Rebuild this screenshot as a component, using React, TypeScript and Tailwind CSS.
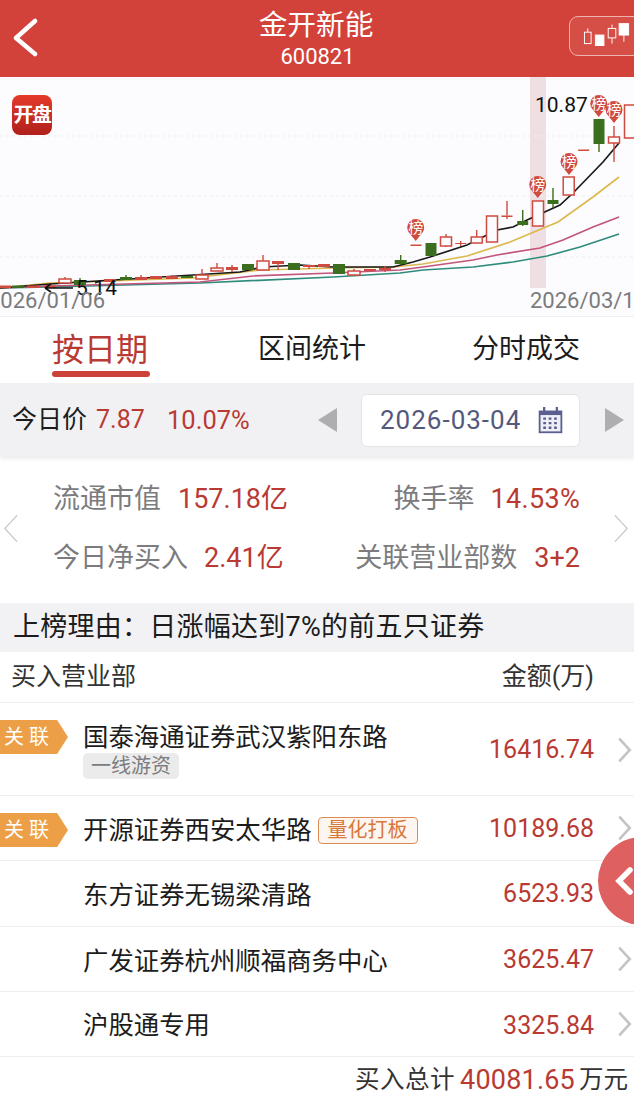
const CJK = "font-['Roboto','Noto_Sans_CJK_SC',sans-serif]"

// chart data in page coordinates: x, body top, body bottom, wick top, wick bottom
type Candle = { x: number; t: number; b: number; wt?: number; wb?: number; kind: 'green' | 'hollow' | 'solid' }

const CANDLES: Candle[] = [
  { x: 5, t: 285.5, b: 288, kind: 'solid' },
  { x: 18, t: 285.5, b: 288, kind: 'green' },
  { x: 33, t: 285.5, b: 288, kind: 'solid' },
  { x: 50, t: 285.5, b: 288, kind: 'solid' },
  { x: 65, t: 279, b: 283, wt: 277, kind: 'hollow' },
  { x: 80, t: 280, b: 285, wt: 278, kind: 'green' },
  { x: 110, t: 279, b: 282, kind: 'solid' },
  { x: 126, t: 277, b: 280, wt: 275, kind: 'green' },
  { x: 141, t: 277, b: 280, wt: 275, kind: 'solid' },
  { x: 156, t: 276, b: 279, kind: 'solid' },
  { x: 172, t: 276, b: 279, wt: 275, kind: 'solid' },
  { x: 187, t: 276, b: 278, kind: 'green' },
  { x: 202, t: 275, b: 279, wt: 269, kind: 'hollow' },
  { x: 217, t: 268, b: 271, wt: 263, kind: 'hollow' },
  { x: 232, t: 267, b: 270, wt: 265, wb: 272, kind: 'solid' },
  { x: 248, t: 264, b: 270, kind: 'green' },
  { x: 263, t: 261, b: 270, wt: 255, kind: 'hollow' },
  { x: 278, t: 261, b: 264, wb: 270, kind: 'solid' },
  { x: 294, t: 263, b: 270, kind: 'green' },
  { x: 309, t: 265, b: 267, wb: 269, kind: 'solid' },
  { x: 324, t: 264, b: 267, kind: 'solid' },
  { x: 339, t: 264, b: 274, kind: 'green' },
  { x: 354, t: 271, b: 275, wt: 269, kind: 'hollow' },
  { x: 370, t: 269, b: 271, kind: 'solid' },
  { x: 385, t: 268, b: 270, wt: 266, wb: 272, kind: 'solid' },
  { x: 400.7, t: 260, b: 264, wt: 255, wb: 265, kind: 'green' },
  { x: 416, t: 244.5, b: 246, kind: 'solid' },
  { x: 431, t: 243, b: 256, kind: 'green' },
  { x: 446, t: 237, b: 246, wt: 234, wb: 247, kind: 'hollow' },
  { x: 460.7, t: 243, b: 244, wt: 241, wb: 246, kind: 'solid' },
  { x: 476.7, t: 237, b: 243, wt: 230, kind: 'hollow' },
  { x: 492, t: 216, b: 242, kind: 'hollow' },
  { x: 507, t: 215.5, b: 217, wt: 201, wb: 219, kind: 'solid' },
  { x: 522.7, t: 221, b: 225, wt: 210, wb: 226, kind: 'green' },
  { x: 538, t: 201, b: 226, kind: 'hollow' },
  { x: 553, t: 200, b: 204, wt: 188, wb: 208, kind: 'green' },
  { x: 568.7, t: 177, b: 195, kind: 'hollow' },
  { x: 583.7, t: 149.5, b: 151, kind: 'solid' },
  { x: 599, t: 119, b: 144, wb: 152, kind: 'green' },
  { x: 614, t: 137, b: 143, wt: 126, wb: 162, kind: 'hollow' },
  { x: 630, t: 105, b: 138, kind: 'hollow' },
]

const PINS = [
  [415.7, 227],
  [537.7, 184],
  [569, 161],
  [598.7, 103],
  [614, 109],
]

const LINES = [
  { color: '#2f8c7c', pts: '0,288 50,287 200,283 333,277 400,273 423,270 473,267 513,262 547,256 580,247 619,234' },
  { color: '#c2557c', pts: '0,288 50,286 200,282 253,276 333,273 400,270 423,267 473,260 497,255 540,248 563,240 593,227 619,217' },
  { color: '#dcb94f', pts: '0,288 50,283 193,278 260,270 333,268 393,267 423,264 467,256 510,242 558,222 593,197 619,177' },
  { color: '#1a1a1a', pts: '0,288 50,284 193,275 240,272 263,267 300,265 333,267 393,267 413,262 430,257 467,245 497,230 513,227 527,220 560,205 573,193 603,162 619,143' },
]

function Chart() {
  return (
    <svg viewBox="0 77 634 239" className="block h-[239px] w-[634px] bg-[#fcfcfe]">
      <rect x="530" y="77" width="16" height="211" fill="#efdfe2" />
      {[136, 196, 257].map(y => (
        <line key={y} x1="0" x2="634" y1={y} y2={y} stroke="#eeeef0" strokeDasharray="3 3" />
      ))}
      {LINES.map(l => (
        <polyline key={l.color} points={l.pts} fill="none" stroke={l.color} strokeWidth="1.7" />
      ))}
      {CANDLES.map(c => {
        const color = c.kind === 'green' ? '#3c6e1f' : '#cf4a3f'
        const w = c.t < 260 && c.x > 400 ? 11 : 12
        return (
          <g key={c.x}>
            {c.wt && <line x1={c.x} x2={c.x} y1={c.wt} y2={c.t} stroke={color} strokeWidth="1.4" />}
            {c.wb && <line x1={c.x} x2={c.x} y1={c.b} y2={c.wb} stroke={color} strokeWidth="1.4" />}
            <rect
              x={c.x - w / 2}
              y={c.t}
              width={w}
              height={c.b - c.t}
              fill={c.kind === 'hollow' ? '#fcfcfe' : color}
              stroke={color}
              strokeWidth={c.kind === 'hollow' ? 1.5 : 0}
            />
          </g>
        )
      })}
      {PINS.map(([x, y]) => (
        <g key={x}>
          <path
            d={`M${x} ${y + 14} L${x - 6} ${y + 6.5} A8.5 8.5 0 1 1 ${x + 6} ${y + 6.5} Z`}
            fill="#cf4a3f"
          />
          <text x={x} y={y + 5.5} textAnchor="middle" fontSize="15" fill="#fff" fontFamily="'Noto Sans CJK SC', sans-serif">
            榜
          </text>
        </g>
      ))}
      <path d="M45 288 L73 288 M45 288 L51 284 M45 288 L51 292" stroke="#111" strokeWidth="1.6" fill="none" />
      <text x="76" y="295" fontSize="21" fill="#111" fontFamily="Roboto, sans-serif">5.14</text>
      <text x="535" y="112" fontSize="21" fill="#111" fontFamily="Roboto, sans-serif">10.87</text>
      <text x="-12" y="308" fontSize="22" fill="#7b7b7d" fontFamily="Roboto, sans-serif">2026/01/06</text>
      <text x="530" y="308" fontSize="22" fill="#7b7b7d" fontFamily="Roboto, sans-serif">2026/03/12</text>
    </svg>
  )
}

function Chevron({ className, thin }: { className: string; thin?: boolean }) {
  return (
    <svg viewBox="0 0 16 32" className={className} fill="none" stroke="#c4c4c6" strokeWidth={thin ? 1.1 : 3}>
      <path d="M2 3 L14 16 L2 29" />
    </svg>
  )
}

function GuanLian() {
  return (
    <div className="absolute left-0 top-[17px] flex h-[34px] w-[68px] items-center bg-[#ec9f47] pl-[4px] text-[20px] tracking-[5px] text-[#fff] shadow-[0_4px_6px_rgba(0,0,0,0.08)] [clip-path:polygon(0_0,84%_0,100%_50%,84%_100%,0_100%)]">
      关联
    </div>
  )
}

type Row = { name: string; amount: string; h: string; tag?: string; gray?: string; linked?: boolean; amountTop: string; nameTop: string }

const ROWS: Row[] = [
  { name: '国泰海通证券武汉紫阳东路', amount: '16416.74', h: 'h-[93px]', gray: '一线游资', linked: true, amountTop: 'top-[29px]', nameTop: 'mt-[16px]' },
  { name: '开源证券西安太华路', amount: '10189.68', h: 'h-[65px]', tag: '量化打板', linked: true, amountTop: 'top-[15px]', nameTop: 'mt-[16px]' },
  { name: '东方证券无锡梁清路', amount: '6523.93', h: 'h-[66px]', amountTop: 'top-[15px]', nameTop: 'mt-[16px]' },
  { name: '广发证券杭州顺福商务中心', amount: '3625.47', h: 'h-[65px]', amountTop: 'top-[15px]', nameTop: 'mt-[16px]' },
  { name: '沪股通专用', amount: '3325.84', h: 'h-[65px]', amountTop: 'top-[16px]', nameTop: 'mt-[15px]' },
]

export default function App() {
  return (
    <div className={`relative h-[1104px] w-[634px] overflow-hidden bg-white ${CJK}`}>
      {/* Header */}
      <div className="relative flex h-[77px] flex-col items-center bg-[#d2423a] pt-[7px] text-white">
        <svg viewBox="0 0 28 40" className="absolute left-[12px] top-[17px] h-[40px] w-[28px]" fill="none" stroke="#fff" strokeWidth="4.5" strokeLinecap="round" strokeLinejoin="round">
          <path d="M23 4 L4 21 L23 37" />
        </svg>
        <div className="-ml-[2px] text-[28.7px] leading-[36px]">金开新能</div>
        <div className="ml-[1px] mt-[1px] text-[22px] leading-[26px]">600821</div>
        <div className="absolute left-[569px] top-[16px] flex h-[40px] w-[80px] rounded-[9px] border border-[#eeb3ae] bg-[#d64f47]">
          <svg viewBox="0 0 65 40" className="h-[38px] w-[65px]" fill="#fff" stroke="#fff" strokeWidth="1">
            <rect x="13.5" y="16" width="7" height="12" fill="none" /><path d="M17 12 V16" />
            <rect x="25" y="19" width="9" height="11" />
            <rect x="38.5" y="12" width="8" height="10" fill="none" /><path d="M42.5 8 V12 M42.5 22 V28" />
            <rect x="50" y="7" width="10" height="12" /><path d="M55 19 V26" />
          </svg>
        </div>
      </div>

      {/* Chart */}
      <div className="relative">
        <Chart />
        <div className="absolute left-[12px] top-[18px] flex h-[40px] w-[40px] items-center justify-center rounded-[8px] bg-gradient-to-b from-[#e53a2c] to-[#b0201c] text-[20px] leading-none font-bold tracking-[-1.5px] text-white">
          开盘
        </div>
      </div>

      {/* Tabs */}
      <div className="relative h-[67px] border-t border-[#efeff1] bg-white">
        <div className="absolute left-[52px] top-[11px] text-[32px] leading-[44px] text-[#b93a33]">按日期</div>
        <div className="absolute left-[52px] top-[54px] h-[6px] w-[98px] rounded-full bg-[#cc4238]" />
        <div className="absolute left-[258px] top-[14px] text-[27px] leading-[36px] text-[#1c1c1c]">区间统计</div>
        <div className="absolute left-[472px] top-[14px] text-[27px] leading-[36px] text-[#1c1c1c]">分时成交</div>
      </div>

      {/* Price bar */}
      <div className="flex h-[74px] items-center bg-[#f1f1f3] pl-[12px] shadow-[0_2px_4px_rgba(0,0,0,0.08)]">
        <span className="w-[84px] text-[25px] text-[#1c1c1c]">今日价</span>
        <span className="w-[71px] text-[25px] text-[#b93a33]">7.87</span>
        <span className="w-[151px] text-[25.5px] text-[#b93a33]">10.07%</span>
        <div className="h-0 w-0 border-y-[12px] border-r-[19px] border-y-transparent border-r-[#aeaeb0]" />
        <div className="ml-[24px] flex h-[53px] w-[219px] items-center rounded-[6px] border border-[#e4e4e6] bg-white pl-[18px] text-[26px] tracking-[1px] text-[#54597c]">
          2026-03-04
          <svg viewBox="0 0 30 32" className="ml-[15px] h-[29px] w-[29px]">
            <path d="M2 5 H28 V30 H2 Z" fill="#5a5f8f" />
            <path d="M8 1 V8 M22 1 V8" stroke="#5a5f8f" strokeWidth="2.5" />
            <rect x="4" y="10" width="22" height="18" fill="#eef0f6" />
            <path d="M7 14 H23 M7 19 H23 M7 24 H23" stroke="#5a5f8f" strokeWidth="2.5" strokeDasharray="3 3" />
          </svg>
        </div>
        <div className="ml-[25px] h-0 w-0 border-y-[12px] border-l-[19px] border-y-transparent border-l-[#aeaeb0]" />
      </div>

      {/* Stats */}
      <div className="relative h-[146px] text-[27px] leading-[34px]">
        <Chevron thin className="absolute left-[2px] top-[55px] h-[33px] w-[18px] scale-x-[-1]" />
        <Chevron thin className="absolute right-[4px] top-[55px] h-[33px] w-[18px]" />
        <div className="absolute left-[53px] top-[25px] flex gap-[17px]">
          <span className="text-[#7c7c7e]">流通市值</span>
          <span className="text-[#b93a33]">157.18亿</span>
        </div>
        <div className="absolute right-[54px] top-[25px] flex gap-[16px]">
          <span className="text-[#7c7c7e]">换手率</span>
          <span className="tracking-[0.3px] text-[#b93a33]">14.53%</span>
        </div>
        <div className="absolute left-[53px] top-[84px] flex gap-[16px]">
          <span className="text-[#7c7c7e]">今日净买入</span>
          <span className="text-[#b93a33]">2.41亿</span>
        </div>
        <div className="absolute right-[54px] top-[84px] flex gap-[17px]">
          <span className="text-[#7c7c7e]">关联营业部数</span>
          <span className="text-[#b93a33]">3+2</span>
        </div>
      </div>

      {/* Reason */}
      <div className="flex h-[49px] items-center bg-[#f2f2f4] pl-[13px] text-[27px] tracking-[0.25px] text-[#1c1c1c]">
        上榜理由：日涨幅达到7%的前五只证券
      </div>

      {/* Table header */}
      <div className="flex h-[51px] items-center justify-between border-b border-[#eeeef0] pr-[40px] pl-[11px] text-[25px] text-[#333]">
        <span>买入营业部</span>
        <span>金额(万)</span>
      </div>

      {/* Rows */}
      {ROWS.map(row => (
        <div key={row.name} className={`relative flex items-start border-b border-[#eeeef0] ${row.h}`}>
          {row.linked && <GuanLian />}
          <div className="pl-[83px]">
            <div className={`flex items-center text-[25.4px] leading-[36px] text-[#1c1c1c] ${row.nameTop}`}>
              {row.name}
              {row.tag && (
                <span className="ml-[6px] rounded-[4px] border border-[#dd8a52] bg-[#fdf6f0] px-[9px] text-[20px] leading-[25px] text-[#d8773a]">
                  {row.tag}
                </span>
              )}
            </div>
            {row.gray && (
              <div className="-mt-[2px] w-fit rounded-[5px] bg-[#ebebeb] px-[8px] text-[20px] leading-[26px] text-[#7c7c7e]">
                {row.gray}
              </div>
            )}
          </div>
          <span className={`absolute right-[40px] text-[25px] leading-[36px] text-[#b93a33] ${row.amountTop}`}>
            {row.amount}
          </span>
          <Chevron className={`absolute right-[2px] h-[28px] w-[15px] ${row.gray ? 'top-[33px]' : 'top-[18px]'}`} />
        </div>
      ))}

      {/* Footer */}
      <div className="flex h-[47px] items-center justify-end pr-[6px] text-[24.5px] text-[#333]">
        <span className="tracking-[0.5px]">买入总计</span>
        <span className="ml-[5px] text-[27px] tracking-[0.2px] text-[#b93a33]">40081.65</span>
        <span className="ml-[4px]">万元</span>
      </div>

      {/* Floating collapse button */}
      <div className="absolute left-[598px] top-[837px] h-[88px] w-[88px] rounded-full bg-[#de6060]">
        <svg viewBox="0 0 20 30" className="absolute left-[16px] top-[29px] h-[30px] w-[20px]" fill="none" stroke="#fff" strokeWidth="5.5" strokeLinecap="round">
          <path d="M16 4 L5 15 L16 26" />
        </svg>
      </div>
    </div>
  )
}
